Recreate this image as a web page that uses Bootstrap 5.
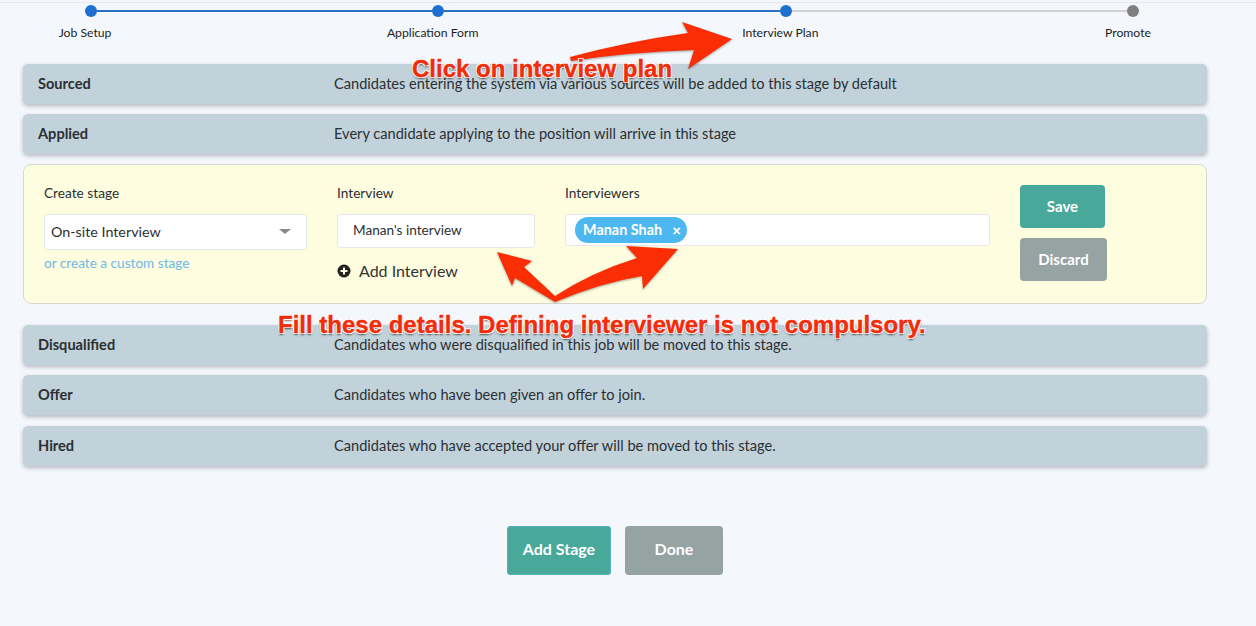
<!DOCTYPE html>
<html lang="en">
<head>
    <meta charset="UTF-8">
    <meta name="viewport" content="width=device-width, initial-scale=1.0">
    <title>Interview Plan</title>
    <link href="https://cdn.jsdelivr.net/npm/bootstrap@5.3.0/dist/css/bootstrap.min.css" rel="stylesheet">
    <style>
        html, body { height: 100%; }
        body { font-family: Lato, "Noto Sans", sans-serif; background-color: #f4f7fb; color: #2b2f33; font-size: 14.6px; overflow: hidden; }
        .page-wrap { position: relative; width: 1256px; height: 626px; border-top: 1px solid #e6e9ee; margin-top: 2px; }
        .stepper-track { height: 16px; padding: 0 117px 0 85px; }
        .step-dot { width: 12px; height: 12px; border-radius: 50%; background: #1f6fd0; flex: none; }
        .step-dot.off { background: #808080; }
        .step-line { height: 2px; flex: 1 1 0; background: #2a72c4; }
        .step-line.off { background: #d0d0d0; }
        .stepper-labels { padding: 5px 48px 0 5px; font-size: 12.2px; color: #1c1f22; }
        .stepper-labels > div { width: 160px; }
        .stage-list { width: 1184px; margin-left: 23px; margin-top: 22px; }
        .stage-row { height: 40px; background: #c1d2da; border-radius: 5px; box-shadow: 0 2px 4px rgba(60,70,80,.35); padding: 0 0 1px 15px; margin-top: 10px; }
        .stage-row.first-row { margin-top: 0; }
        .stage-row.after-form { margin-top: 21px; }
        .stage-row.last-row { margin-top: 11px; }
        .stage-name { width: 296px; font-weight: 700; flex: none; }
        .stage-form { height: 140px; background: #fffde0; border: 1px solid #d6d8d4; border-radius: 8px; padding: 20px 20px 0 20px; margin-top: 10px; }
        .field-label { font-size: 13.7px; height: 29px; line-height: 16px; }
        .col-stage { width: 263px; margin-right: 30px; }
        .col-interview { width: 198px; margin-right: 30px; }
        .col-people { width: 425px; margin-right: 30px; }
        .fake-select, .plan-input { background: #fff; border: 1px solid #e8e8e8; border-radius: 3px; color: #2b2f33; }
        .fake-select { height: 36px; padding: 0 15px 2px 6px; font-size: 14.3px; }
        .fake-caret { width: 0; height: 0; border-left: 6px solid transparent; border-right: 6px solid transparent; border-top: 5px solid #8a8a8a; }
        .plan-input.form-control { height: 34px; padding: 0 15px 2px; font-size: 13.6px; border-radius: 3px; box-shadow: none; }
        .people-box { height: 32px; padding-left: 9px; }
        .person-chip { background: #4db8f0; color: #fff; height: 26px; border-radius: 13px; padding: 0 6px 0 8px; font-weight: 700; font-size: 14.4px; width: 112px; }
        .chip-close { font-size: 15px; font-weight: 900; line-height: 1; }
        .custom-link { color: #6db8e8; font-size: 13.6px; margin-top: 3px; text-decoration: none; display: block; }
        .add-interview { margin-top: 11px; font-size: 16px; color: #333; }
        .add-btn, .grey-btn { color: #fff; font-weight: 700; border: 0; border-radius: 4px; font-size: 15px; padding: 0 0 2px; }
        .add-btn { background: #48a899; }
        .grey-btn { background: #96a3a3; }
        .add-btn:hover { background: #48a899; color: #fff; }
        .grey-btn:hover { background: #96a3a3; color: #fff; }
        .btn-save { width: 85px; height: 43px; }
        .btn-discard { width: 87px; height: 43px; margin-top: 10px; }
        .btn-stage { width: 104px; height: 49px; box-shadow: 0 0 0 1px #4fb3c4 inset; font-size: 16px; padding-bottom: 4px; }
        .btn-done { width: 98px; height: 49px; font-size: 16px; padding-bottom: 4px; }
        .bottom-actions { margin-top: 60px; padding-right: 26px; gap: 14px; }
        .overlay-arrows { position: absolute; left: 0; top: -3px; width: 1256px; height: 626px; pointer-events: none; filter: drop-shadow(0 1px 1px rgba(0,0,0,.35)); }
        .note-text { position: absolute; white-space: nowrap; font-family: "Liberation Sans", Arial, sans-serif; font-weight: 700; color: #f02c0a; font-size: 24px; line-height: 28px; -webkit-text-stroke: .4px #f02c0a;
            text-shadow: -1px -1px 0 #fff, 1px -1px 0 #fff, -1px 1px 0 #fff, 1px 1px 0 #fff, 0 2px 2px rgba(0,0,0,.6); }
        .note-one { left: 412px; top: 52px; }
        .note-two { left: 278px; top: 308px; }
    </style>
</head>
<body>
    <div class="page-wrap">
        <div class="stepper-track d-flex align-items-center">
            <div class="step-dot"></div><div class="step-line"></div>
            <div class="step-dot"></div><div class="step-line"></div>
            <div class="step-dot"></div><div class="step-line off"></div>
            <div class="step-dot off"></div>
        </div>
        <div class="stepper-labels d-flex justify-content-between text-center">
            <div>Job Setup</div>
            <div>Application Form</div>
            <div>Interview Plan</div>
            <div>Promote</div>
        </div>

        <div class="stage-list d-flex flex-column">
            <div class="stage-row first-row d-flex align-items-center">
                <div class="stage-name">Sourced</div>
                <div>Candidates entering the system via various sources will be added to this stage by default</div>
            </div>
            <div class="stage-row d-flex align-items-center">
                <div class="stage-name">Applied</div>
                <div>Every candidate applying to the position will arrive in this stage</div>
            </div>

            <div class="stage-form d-flex">
                <div class="col-stage">
                    <div class="field-label">Create stage</div>
                    <div class="fake-select d-flex align-items-center justify-content-between">
                        <span>On-site Interview</span><span class="fake-caret"></span>
                    </div>
                    <a class="custom-link" href="#">or create a custom stage</a>
                </div>
                <div class="col-interview">
                    <div class="field-label">Interview</div>
                    <input type="text" class="form-control plan-input" value="Manan's interview">
                    <div class="add-interview d-flex align-items-center gap-2">
                        <svg width="14" height="14" viewBox="0 0 14 14"><circle cx="7" cy="7" r="6.5" fill="#222"/><path d="M7 3.5v7M3.5 7h7" stroke="#fffde0" stroke-width="2"/></svg>
                        <span>Add Interview</span>
                    </div>
                </div>
                <div class="col-people">
                    <div class="field-label">Interviewers</div>
                    <div class="plan-input people-box d-flex align-items-center">
                        <span class="person-chip d-inline-flex align-items-center justify-content-between">Manan Shah <span class="chip-close">×</span></span>
                    </div>
                </div>
                <div class="d-flex flex-column">
                    <button class="btn add-btn btn-save">Save</button>
                    <button class="btn grey-btn btn-discard">Discard</button>
                </div>
            </div>

            <div class="stage-row after-form d-flex align-items-center">
                <div class="stage-name">Disqualified</div>
                <div>Candidates who were disqualified in this job will be moved to this stage.</div>
            </div>
            <div class="stage-row d-flex align-items-center">
                <div class="stage-name">Offer</div>
                <div>Candidates who have been given an offer to join.</div>
            </div>
            <div class="stage-row last-row d-flex align-items-center">
                <div class="stage-name">Hired</div>
                <div>Candidates who have accepted your offer will be moved to this stage.</div>
            </div>
        </div>

        <div class="bottom-actions d-flex justify-content-center">
            <button class="btn add-btn btn-stage">Add Stage</button>
            <button class="btn grey-btn btn-done">Done</button>
        </div>

        <!-- red annotations drawn over the screenshot -->
        <svg class="overlay-arrows" viewBox="0 0 1256 626">
            <path fill="#fb2d05" d="M570 57 Q630 41 688 33 L682 22 L732 39 L688 69 L694 50 Q630 52 571 61 Z"/>
            <path fill="#fb2d05" d="M497 252 L532 261 L524 267 L555 296 Q592 272 637 258 L626 246 L678 249 L643 289 L642 276 Q600 283 555 302 L515 278 L512 286 Z"/>
        </svg>
        <div class="note-text note-one">Click on interview plan</div>
        <div class="note-text note-two">Fill these details. Defining interviewer is not compulsory.</div>
    </div>
</body>
</html>
